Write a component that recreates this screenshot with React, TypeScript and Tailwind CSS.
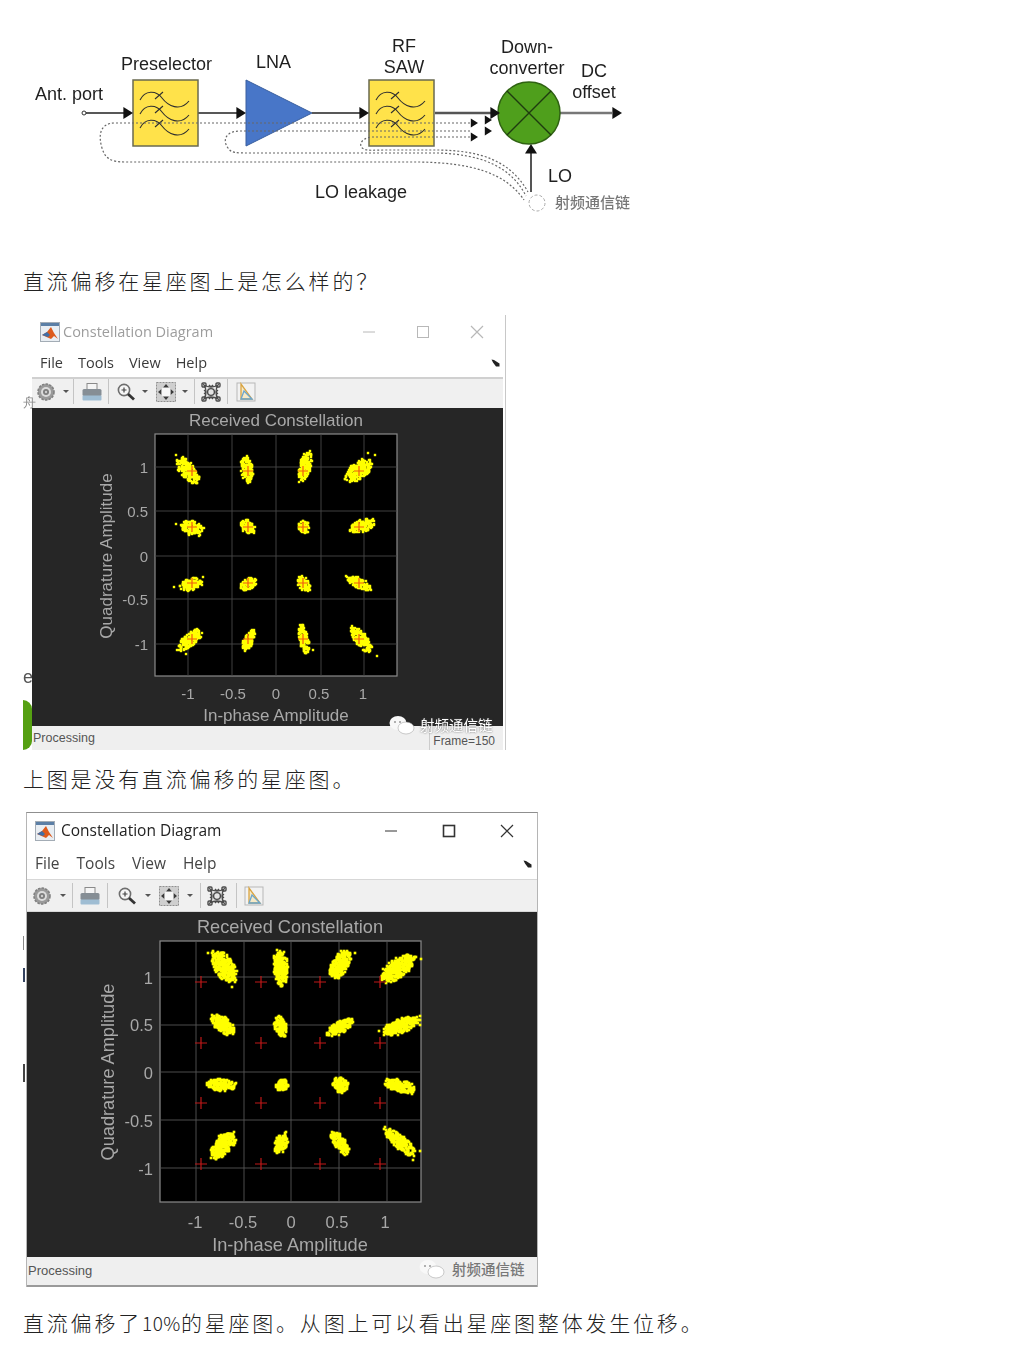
import { useMemo, type ReactNode } from 'react';

type Cluster = [number, number, number, number, number, [number, number][]?];

// cheap seeded rng so the scatter comes out the same every time
function rng(seed: number) {
  let s = seed;
  return () => {
    s = (s * 16807) % 2147483647;
    return s / 2147483647;
  };
}

function scatter(clusters: Cluster[], seed: number) {
  const r = rng(seed);
  const pts: [number, number][] = [];
  for (const [cx, cy, halfLen, halfWid, deg, extra] of clusters) {
    const a = (deg * Math.PI) / 180;
    const n = Math.round(halfLen * halfWid * 2.2) + 12;
    for (let i = 0; i < n; i++) {
      const t = r() * Math.PI * 2;
      // rough edge instead of a clean ellipse
      const d = Math.pow(r(), 0.6) * (0.85 + 0.3 * r());
      const u = Math.cos(t) * d * halfLen;
      const v = Math.sin(t) * d * halfWid * 1.15;
      const x = cx + u * Math.cos(a) - v * Math.sin(a);
      const y = cy + u * Math.sin(a) + v * Math.cos(a);
      pts.push([Math.round(x), Math.round(y)]);
    }
    for (const p of extra ?? []) pts.push(p);
  }
  return pts;
}

const plotA: Cluster[] = [
  [33, 37, 15, 6, 52, [[21, 21], [28, 23], [42, 49]]],
  [92, 35, 13, 5, 82],
  [150, 33, 15, 5, -75, [[154, 19], [148, 23]]],
  [204, 37, 15, 7, -38, [[213, 19], [220, 21]]],
  [37, 94, 11, 6, 15, [[21, 90], [26, 91], [44, 102]]],
  [93, 93, 8, 5, 40],
  [149, 93, 6, 5, -10],
  [207, 92, 13, 5, -12, [[218, 85]]],
  [36, 150, 11, 5, -20, [[19, 153], [48, 143]]],
  [93, 150, 8, 5, -30],
  [149, 150, 8, 5, 55],
  [204, 149, 13, 4, 25],
  [35, 206, 15, 5, -40, [[31, 220]]],
  [94, 206, 11, 4, -65],
  [149, 206, 15, 4, 78, [[158, 216]]],
  [206, 205, 16, 5, 52, [[222, 222]]],
];

const plotB: Cluster[] = [
  [64, 26, 17, 8, 58, [[48, 12], [63, 12], [72, 46]]],
  [121, 27, 17, 6, 85, [[117, 9], [124, 11]]],
  [180, 24, 16, 7, -60, [[195, 12], [185, 12]]],
  [238, 27, 19, 8, -38, [[261, 18], [222, 38]]],
  [63, 84, 13, 6, 40, [[57, 74]]],
  [121, 86, 10, 5, 75, [[119, 75]]],
  [180, 86, 14, 5, -30, [[192, 82]]],
  [241, 85, 19, 6, -20, [[219, 90], [260, 75], [260, 84], [226, 90]]],
  [62, 144, 14, 5, 0, [[49, 141], [75, 143]]],
  [122, 144, 6, 5, 0],
  [180, 144, 8, 6, 25],
  [240, 145, 17, 5, 12, [[254, 146], [252, 153], [225, 143]]],
  [63, 204, 16, 7, -50, [[74, 191]]],
  [121, 203, 10, 5, -75, [[126, 191]]],
  [180, 202, 13, 5, 55],
  [240, 201, 19, 5, 40, [[224, 188], [260, 210], [253, 219]]],
];

function Scatter({ clusters, seed, dot }: { clusters: Cluster[]; seed: number; dot: number }) {
  const pts = useMemo(() => scatter(clusters, seed), [clusters, seed]);
  return (
    <g fill="#ffff00">
      {pts.map(([x, y], i) => (
        <rect key={i} x={x - dot / 2} y={y - dot / 2} width={dot} height={dot} />
      ))}
    </g>
  );
}

function Cross({ x, y, color, size }: { x: number; y: number; color: string; size: number }) {
  return <path d={`M${x - size} ${y}H${x + size}M${x} ${y - size}V${y + size}`} stroke={color} strokeWidth="1.2" />;
}

type ChartProps = {
  w: number;
  h: number;
  box: [number, number, number];
  titleX: number;
  titleY: number;
  gridX: number[];
  gridY: number[];
  gridColor: string;
  crossX: number[];
  crossY: number[];
  crossColor: string;
  crossSize: number;
  clusters: Cluster[];
  seed: number;
  dot: number;
  yLabelX: number;
  yLabelY: number;
  yTicks: [string, number, number][];
  xTicks: [string, number][];
  xTickY: number;
  axisY: number;
  fontSize: number;
  tickSize: number;
};

function Chart(p: ChartProps) {
  const [bx, by, bs] = p.box;
  return (
    <svg width={p.w} height={p.h} className="block">
      <text x={p.titleX} y={p.titleY} fill="#a8a8a8" fontSize={p.fontSize} textAnchor="middle">Received Constellation</text>
      <g transform={`translate(${bx} ${by})`}>
        <rect x="0" y="0" width={bs} height={bs} fill="#000" stroke="#8a8a8a" strokeWidth="1.2" />
        {p.gridX.map((x) => <line key={x} x1={x} x2={x} y1="0" y2={bs} stroke={p.gridColor} strokeWidth="0.9" />)}
        {p.gridY.map((y) => <line key={y} y1={y} y2={y} x1="0" x2={bs} stroke={p.gridColor} strokeWidth="0.9" />)}
        <Scatter clusters={p.clusters} seed={p.seed} dot={p.dot} />
        {p.crossY.map((y) => p.crossX.map((x) => <Cross key={`${x}-${y}`} x={x} y={y} color={p.crossColor} size={p.crossSize} />))}
      </g>
      {p.yTicks.map(([t, x, y]) => (
        <text key={t} x={x} y={y} fill="#a8a8a8" fontSize={p.tickSize} textAnchor="end">{t}</text>
      ))}
      {p.xTicks.map(([t, x]) => (
        <text key={t} x={x} y={p.xTickY} fill="#a8a8a8" fontSize={p.tickSize} textAnchor="middle">{t}</text>
      ))}
      <text x={p.titleX} y={p.axisY} fill="#a8a8a8" fontSize={p.fontSize} textAnchor="middle">In-phase Amplitude</text>
      <text transform={`translate(${p.yLabelX} ${p.yLabelY}) rotate(-90)`} fill="#a8a8a8" fontSize={p.fontSize} textAnchor="middle">Quadrature Amplitude</text>
    </svg>
  );
}

function MatlabIcon() {
  return (
    <svg width="20" height="20" viewBox="0 0 20 20" className="shrink-0">
      <rect x="0.5" y="0.5" width="19" height="19" fill="#e9eef3" stroke="#a3acb5" />
      <rect x="1" y="1" width="18" height="3" fill="#5b7fa6" />
      <path d="M2 13l5-3 4-5 3 6 4 6-4-3-3 3z" fill="#dd5a1c" />
      <path d="M2 13l5-3 3 3-2 2z" fill="#3f6fa8" />
    </svg>
  );
}

function Caret() {
  return <span className="h-0 w-0 shrink-0 border-x-[3px] border-t-[3px] border-x-transparent border-t-[#555]" />;
}

function Sep() {
  return <span className="h-[25px] w-px shrink-0 bg-[#c4c4c4]" />;
}

function DockArrow() {
  return (
    <svg width="9" height="8" viewBox="0 0 9 8" className="ml-auto shrink-0">
      <path d="M0.5 0.5L3 1L8.5 4.5V7.5L5 7.5L2 3.5z" fill="#222" />
    </svg>
  );
}

function GearIcon() {
  return (
    <svg width="20" height="20" viewBox="0 0 20 20" className="shrink-0">
      <circle cx="10" cy="10" r="8" fill="#9a9a9a" stroke="#808080" strokeDasharray="2.5 1.2" strokeWidth="1.6" />
      <circle cx="10" cy="10" r="5" fill="#dcdcdc" />
      <circle cx="10" cy="10" r="3" fill="#7d7d7d" />
      <circle cx="10" cy="10" r="1.2" fill="#cfcfcf" />
    </svg>
  );
}

function PrintIcon() {
  return (
    <svg width="22" height="20" viewBox="0 0 22 20" className="shrink-0">
      <rect x="6" y="1.5" width="10" height="6" fill="#f5f5f5" stroke="#8a8a8a" />
      <rect x="1.5" y="7" width="19" height="7" rx="1.5" fill="#868e95" />
      <rect x="1.5" y="13.5" width="19" height="5" rx="1" fill="#9fbdd3" />
    </svg>
  );
}

function ZoomIcon() {
  return (
    <svg width="20" height="20" viewBox="0 0 20 20" fill="none" className="shrink-0">
      <circle cx="8" cy="8" r="5.6" fill="#f6f6f6" stroke="#6e6e6e" strokeWidth="1.6" />
      <path d="M5.5 8h5M8 5.5v5" stroke="#444" strokeWidth="1.2" />
      <path d="M12 12l6 5.5" stroke="#333" strokeWidth="2.8" />
    </svg>
  );
}

function FitIcon() {
  return (
    <svg width="22" height="22" viewBox="0 0 22 22" className="shrink-0">
      <rect x="1.5" y="1.5" width="19" height="19" fill="#cfcfcf" stroke="#8f8f8f" strokeDasharray="2 1" />
      <path d="M11 3.5L18.5 11L11 18.5L3.5 11z" fill="#f8f8f8" />
      <path d="M11 3l3 3.4h-6zM11 19l3-3.4h-6zM3 11l3.4-3v6zM19 11l-3.4-3v6z" fill="#3b3b3b" />
    </svg>
  );
}

function NodesIcon() {
  return (
    <svg width="22" height="22" viewBox="0 0 22 22" fill="none" stroke="#4a4a4a" strokeWidth="1.4" className="shrink-0">
      <path d="M4 4Q11 8 18 4Q14 11 18 18Q11 14 4 18Q8 11 4 4z" fill="#e4e4e4" />
      <path d="M4 9Q7 11 4 13M18 9Q15 11 18 13M9 4Q11 7 13 4M9 18Q11 15 13 18" />
      <circle cx="11" cy="11" r="3.4" />
      <rect x="2" y="2" width="4" height="4" rx="1" /><rect x="16" y="2" width="4" height="4" rx="1" /><rect x="2" y="16" width="4" height="4" rx="1" /><rect x="16" y="16" width="4" height="4" rx="1" />
    </svg>
  );
}

function PlayIcon() {
  return (
    <svg width="20" height="20" viewBox="0 0 20 20" fill="none" className="shrink-0">
      <rect x="1" y="1" width="18" height="18" fill="#f2f2f2" stroke="#b7b7b7" />
      <path d="M5 2v15h11z" fill="#f6e9c6" stroke="#d9a441" strokeWidth="1.3" />
      <path d="M5 17h11L8 9z" stroke="#6aa6cf" strokeWidth="1.3" />
    </svg>
  );
}

function WinControls({ dim, gap }: { dim?: boolean; gap: string }) {
  const stroke = dim ? '#b8b8b8' : '#333';
  return (
    <div className={`ml-auto flex items-center ${gap}`}>
      <svg width="14" height="14" viewBox="0 0 14 14" fill="none" stroke={stroke}><path d="M1 7h12" /></svg>
      <svg width="14" height="14" viewBox="0 0 14 14" fill="none" stroke={stroke} strokeWidth={dim ? 1 : 1.6}><rect x="1.5" y="1.5" width="11" height="11" /></svg>
      <svg width="14" height="14" viewBox="0 0 14 14" fill="none" stroke={stroke} strokeWidth="1.2"><path d="M1 1l12 12M13 1L1 13" /></svg>
    </div>
  );
}

function ChatMark() {
  return (
    <svg width="26" height="20" viewBox="0 0 26 20" className="shrink-0">
      <ellipse cx="9" cy="8" rx="8.5" ry="7" fill="#f8f8f8" />
      <ellipse cx="17" cy="13" rx="8" ry="6" fill="#fff" stroke="#999" strokeWidth="0.5" />
      <circle cx="6" cy="7" r="1" fill="#999" /><circle cx="11" cy="7" r="1" fill="#999" />
    </svg>
  );
}

function Para({ children, className }: { children: ReactNode; className?: string }) {
  return (
    <p className={`font-['Noto_Sans_CJK_SC',sans-serif] text-[21px] font-light leading-[30px] tracking-[2.8px] text-[#222] ${className ?? ''}`}>{children}</p>
  );
}

function Filter({ x }: { x: number }) {
  const wave = (dy: number) => `M${x + 7} ${100 + dy}C${x + 12} ${90 + dy} ${x + 23} ${90 + dy} ${x + 29} ${98 + dy}C${x + 35} ${106 + dy} ${x + 47} ${112 + dy} ${x + 56} ${101 + dy}`;
  const slash = (dy: number) => `M${x + 22} ${99 + dy}L${x + 30} ${92 + dy}`;
  return (
    <g>
      <rect x={x} y="80" width="65" height="66" fill="#ffe24a" stroke="#6a6a50" strokeWidth="1.5" />
      <g fill="none" stroke="#2f2f2f" strokeWidth="1.1">
        {[0, 14, 28].map((dy) => <path key={dy} d={`${wave(dy)}${slash(dy)}`} />)}
      </g>
    </g>
  );
}

function Arrow({ x, y, dir = 'r', s = 7 }: { x: number; y: number; dir?: 'r' | 'u'; s?: number }) {
  const d = dir === 'r' ? `M${x} ${y}l${-s * 1.6} ${-s}v${s * 2}z` : `M${x} ${y}l${-s} ${s * 1.6}h${s * 2}z`;
  return <path d={d} fill="#111" />;
}

function FlowDiagram() {
  return (
    <svg width="663" height="240" viewBox="0 0 663 240" className="-ml-[23px] block blur-[0.7px]">
      <g className="fill-[#1f1f1f] text-[18px]">
        <text x="35" y="100">Ant. port</text>
        <text x="121" y="70">Preselector</text>
        <text x="256" y="68">LNA</text>
        <text x="404" y="52" textAnchor="middle">RF</text>
        <text x="404" y="73" textAnchor="middle">SAW</text>
        <text x="527" y="53" textAnchor="middle">Down-</text>
        <text x="527" y="74" textAnchor="middle">converter</text>
        <text x="594" y="77" textAnchor="middle">DC</text>
        <text x="594" y="98" textAnchor="middle">offset</text>
        <text x="548" y="182">LO</text>
        <text x="315" y="198">LO leakage</text>
      </g>

      <circle cx="84" cy="113" r="2" fill="#fff" stroke="#333" />
      <path d="M86 113H125M198 113H240M312 113H362" stroke="#222" strokeWidth="1.6" />
      <path d="M435 113H492" stroke="#555" strokeWidth="2.6" />
      <path d="M560 113H612" stroke="#777" strokeWidth="2.6" />
      <path d="M531 192V150" stroke="#555" strokeWidth="2" />
      <Filter x={133} />
      <Arrow x={133} y={113} s={6} />
      <path d="M246 80V146L312 113z" fill="#4876c8" stroke="#3a5f9e" />
      <Arrow x={246} y={113} s={6} />
      <Filter x={369} />
      <Arrow x={369} y={113} s={6} />
      <circle cx="529" cy="113" r="31" fill="#4f9f1c" stroke="#2f6212" strokeWidth="1.5" />
      <path d="M507 91L551 135M551 91L507 135" stroke="#1f3a10" strokeWidth="1.4" />
      <Arrow x={500} y={113} s={6} />
      <Arrow x={622} y={113} s={6} />
      <Arrow x={531} y={144} dir="u" s={6} />

      <g fill="none" stroke="#666" strokeWidth="1.2" strokeDasharray="2 2">
        <path d="M470 123H115C100 123 98 135 102 148C105 158 110 162 125 162H420C470 163 505 172 524 200" />
        <path d="M470 131H240C226 131 222 140 228 148C231 153 236 153 250 153H440C480 155 510 165 526 196" />
        <path d="M470 137H372C360 138 358 147 364 149C368 151 372 150 385 150H440C480 151 510 160 528 192" />
      </g>
      <Arrow x={478} y={123} s={4.5} />
      <Arrow x={478} y={137} s={4.5} />
      <Arrow x={492} y={120} s={4.5} />
      <Arrow x={492} y={131} s={4.5} />

      <circle cx="537" cy="203" r="8" fill="#fff" stroke="#aaa" strokeDasharray="3 2" />
      <text x="555" y="208" className="fill-[#777] font-['Noto_Sans_CJK_SC',sans-serif] text-[15px] font-medium">射频通信链</text>
    </svg>
  );
}

export default function App() {
  return (
    <div className="min-h-[1354px] w-[1036px] bg-white font-['Liberation_Sans',sans-serif]">
      <div className="pl-[23px]">
        <FlowDiagram />
        <Para className="mt-[25px]">直流偏移在星座图上是怎么样的？</Para>

        {/* first window, no DC offset */}
        <div className="relative mt-[20px] flex h-[435px] w-[483px] flex-col border-r border-r-[#c8c8c8] pl-[9px] pr-[2px] blur-[0.7px]">
          <span className="absolute bottom-0 left-0 h-[50px] w-[9px] rounded-r-[9px] bg-[#55a012]" />
          <span className="absolute left-0 top-[353px] text-[18px] leading-none text-[#555]">e</span>
          <span className="absolute left-0 top-[81px] text-[13px] leading-none text-[#888]">舟</span>
          <div className="flex h-[34px] shrink-0 items-center pl-[8px] pr-[19px] font-['Open_Sans',sans-serif] text-[14.5px] text-[#9d9d9d]">
            <MatlabIcon />
            <span className="ml-[3px]">Constellation Diagram</span>
            <WinControls dim gap="gap-[40px]" />
          </div>
          <div className="flex h-[28px] shrink-0 items-center gap-[15px] pl-[8px] pr-[3px] font-['Open_Sans',sans-serif] text-[14.5px] text-[#3a3a3a]">
            <span>File</span><span>Tools</span><span>View</span><span>Help</span>
            <DockArrow />
          </div>
          <div className="flex h-[31px] shrink-0 items-center border-t-2 border-t-[#d0d0d0] bg-[#f0f0f0] pb-[4px] pl-[4px]">
            <GearIcon /><span className="w-[7px]" /><Caret /><span className="w-[4px]" /><Sep /><span className="w-[7px]" />
            <PrintIcon /><span className="w-[5px]" /><Sep /><span className="w-[7px]" />
            <ZoomIcon /><span className="w-[6px]" /><Caret /><span className="w-[7px]" />
            <FitIcon /><span className="w-[5px]" /><Caret /><span className="w-[6px]" /><Sep /><span className="w-[5px]" />
            <NodesIcon /><span className="w-[5px]" /><Sep /><span className="w-[8px]" /><PlayIcon />
          </div>
          <div className="relative h-[318px] shrink-0 bg-[#262626]">
            <Chart
              w={471}
              h={318}
              box={[123, 26, 242]}
              titleX={244}
              titleY={18}
              gridX={[33, 77, 121, 166, 209]}
              gridY={[33, 77, 122, 165, 210]}
              gridColor="#484848"
              crossX={[37, 93, 148, 204]}
              crossY={[37, 93, 149, 205]}
              crossColor="#f05a10"
              crossSize={5}
              clusters={plotA}
              seed={7}
              dot={2.4}
              yLabelX={80}
              yLabelY={148}
              yTicks={[['1', 116, 65], ['0.5', 116, 109], ['0', 116, 154], ['-0.5', 116, 197], ['-1', 116, 242]]}
              xTicks={[['-1', 156], ['-0.5', 201], ['0', 244], ['0.5', 287], ['1', 331]]}
              xTickY={291}
              axisY={313}
              fontSize={17}
              tickSize={15}
            />
          </div>
          <div className="relative flex h-[24px] shrink-0 items-center justify-between bg-[#efefef] pl-[1px] text-[12.5px] text-[#555]">
            <span>Processing</span>
            <span className="flex h-full items-end border-l border-l-[#ccc] pl-[3px] pr-[8px] text-[12px] leading-[17px]">Frame=150</span>
            <div className="absolute left-[357px] top-[-12px] flex items-center gap-[5px]">
              <ChatMark />
              <span className="whitespace-nowrap font-['Noto_Sans_CJK_SC',sans-serif] text-[14.5px] text-white [text-shadow:0_0_2px_#555]">射频通信链</span>
            </div>
          </div>
        </div>

        <Para className="mt-[13px]">上图是没有直流偏移的星座图。</Para>

        {/* second window, 10% offset */}
        <div className="relative mt-[19px] h-[480px] w-[515px] pl-[3px] blur-[0.7px]">
          <span className="absolute left-0 top-[124px] h-[14px] w-px bg-[#888]" />
          <span className="absolute left-0 top-[156px] h-[14px] w-[2px] bg-[#33425f]" />
          <span className="absolute left-0 top-[252px] h-[18px] w-[2px] bg-[#444]" />
          <div className="flex flex-col border-x border-t border-x-[#b5b5b5] border-t-[#8f8f8f]">
            <div className="flex h-[35px] shrink-0 items-center pl-[8px] pr-[23px] font-['Open_Sans',sans-serif] text-[15.5px] text-[#222]">
              <MatlabIcon />
              <span className="ml-[6px]">Constellation Diagram</span>
              <WinControls gap="gap-[44px]" />
            </div>
            <div className="flex h-[31px] shrink-0 items-center gap-[17px] pl-[8px] pr-[5px] font-['Open_Sans',sans-serif] text-[15.5px] text-[#444]">
              <span>File</span><span>Tools</span><span>View</span><span>Help</span>
              <DockArrow />
            </div>
            <div className="flex h-[33px] shrink-0 items-center border-y border-[#d7d7d7] bg-[#f0f0f0] pl-[5px]">
              <GearIcon /><span className="w-[8px]" /><Caret /><span className="w-[6px]" /><Sep /><span className="w-[6px]" />
              <PrintIcon /><span className="w-[6px]" /><Sep /><span className="w-[9px]" />
              <ZoomIcon /><span className="w-[8px]" /><Caret /><span className="w-[7px]" />
              <FitIcon /><span className="w-[7px]" /><Caret /><span className="w-[7px]" /><Sep /><span className="w-[5px]" />
              <NodesIcon /><span className="w-[8px]" /><Sep /><span className="w-[7px]" /><PlayIcon />
            </div>
            <div className="h-[345px] shrink-0 bg-[#262626]">
              <Chart
                w={509}
                h={345}
                box={[133, 29, 261]}
                titleX={263}
                titleY={21}
                gridX={[36, 84, 131, 179, 227]}
                gridY={[36, 84, 131, 179, 227]}
                gridColor="#555"
                crossX={[41, 101, 160, 220]}
                crossY={[41, 102, 162, 223]}
                crossColor="#c01818"
                crossSize={6}
                clusters={plotB}
                seed={11}
                dot={2.6}
                yLabelX={87}
                yLabelY={160}
                yTicks={[['1', 126, 72], ['0.5', 126, 119], ['0', 126, 167], ['-0.5', 126, 215], ['-1', 126, 263]]}
                xTicks={[['-1', 168], ['-0.5', 216], ['0', 264], ['0.5', 310], ['1', 358]]}
                xTickY={316}
                axisY={339}
                fontSize={18.2}
                tickSize={16.5}
              />
            </div>
            <div className="relative flex h-[30px] shrink-0 items-center border-b-2 border-b-[#9a9a9a] bg-[#efefef] pl-[1px] text-[13px] text-[#555]">
              <span>Processing</span>
              <div className="absolute left-[392px] top-[1px] flex items-center gap-[7px]">
                <ChatMark />
                <span className="whitespace-nowrap font-['Noto_Sans_CJK_SC',sans-serif] text-[14.5px] font-medium text-[#777]">射频通信链</span>
              </div>
            </div>
          </div>
        </div>

        <Para className="mt-[15px]">直流偏移了<span className="text-[19px] tracking-[0.5px]">10%</span>的星座图。从图上可以看出星座图整体发生位移。</Para>
      </div>
    </div>
  );
}
